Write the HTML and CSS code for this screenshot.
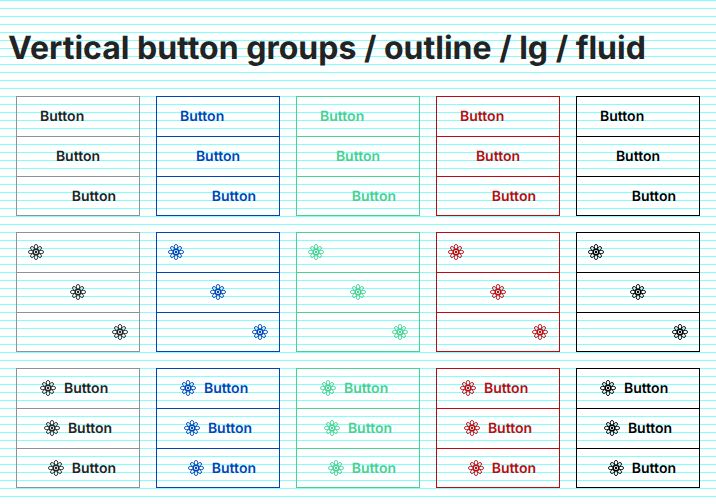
FILE: index.html
```
<!DOCTYPE html>
<html lang="en">
<head>
<meta charset="utf-8">
<title>Vertical button groups</title>
<link rel="stylesheet" href="styles.css">
</head>
<body>
<svg class="defs" aria-hidden="true">
  <symbol id="atom" viewBox="0 0 16 16">
    <g fill="none" stroke="currentColor" stroke-width="0.9">
      <ellipse cx="13.2" cy="8" rx="2.4" ry="1.7"/>
      <ellipse cx="2.8" cy="8" rx="2.4" ry="1.7"/>
      <ellipse cx="8" cy="13.2" rx="1.7" ry="2.4"/>
      <ellipse cx="8" cy="2.8" rx="1.7" ry="2.4"/>
      <ellipse cx="13" cy="8" rx="2.2" ry="1.6" transform="rotate(45 8 8)"/>
      <ellipse cx="13" cy="8" rx="2.2" ry="1.6" transform="rotate(135 8 8)"/>
      <ellipse cx="13" cy="8" rx="2.2" ry="1.6" transform="rotate(225 8 8)"/>
      <ellipse cx="13" cy="8" rx="2.2" ry="1.6" transform="rotate(315 8 8)"/>
      <circle cx="8" cy="8" r="2.7" stroke-width="1.2"/>
    </g>
    <circle cx="8" cy="8" r="1.2" fill="currentColor"/>
  </symbol>
</svg>
<h1 class="title">Vertical button groups / outline / lg / fluid</h1>
<main class="board" id="board"></main>
<script src="script.js"></script>
</body>
</html>
```
FILE: styles.css
```
* {
  box-sizing: border-box;
}

body {
  margin: 0;
  min-height: 100vh;
  font-family: Inter, "Liberation Sans", sans-serif;
  text-rendering: geometricPrecision;
  color: #222324;
  background: repeating-linear-gradient(#80ffff 0 1px, #ffffff 1px 8px);
}

.defs {
  display: none;
}

.title {
  margin: 0;
  padding: 28px 8px;
  font-size: 32px;
  line-height: 40px;
  font-weight: 700;
  white-space: nowrap;
}

.board {
  display: grid;
  grid-template-columns: repeat(5, 1fr);
  gap: 16px;
  padding: 0 16px 16px;
}

.group {
  display: flex;
  flex-direction: column;
  border: 0 solid var(--line);
  border-width: 0 1px;
  color: var(--ink);
}

.button {
  height: 40px;
  display: flex;
  align-items: center;
  gap: 8px;
  padding: 0 23px;
  border: 0 solid var(--line);
  border-width: 1px 0;
  border-bottom-color: transparent;
  background: transparent;
  color: inherit;
  font: 600 14px/21px Inter, "Liberation Sans", sans-serif;
  text-rendering: inherit;
  cursor: pointer;
}

.button:last-child {
  border-bottom-color: var(--line);
}

.button.icon-only {
  padding: 0 11px;
}

.start { justify-content: flex-start; }
.center { justify-content: center; }
.end { justify-content: flex-end; }

.icon {
  width: 16px;
  height: 16px;
  flex: none;
}

.neutral { --ink: #222324; --line: #8f9299; }
.primary { --ink: #0045b5; --line: #0045b5; }
.success { --ink: #48d192; --line: #48d192; }
.danger { --ink: #b50d12; --line: #b50d12; }
.black { --ink: #000000; --line: #000000; }
```
FILE: script.js
```
const variants = ["neutral", "primary", "success", "danger", "black"];
const kinds = ["text", "icon-only", "both"];
const aligns = ["start", "center", "end"];
const icon = '<svg class="icon" aria-hidden="true"><use href="#atom"/></svg>';

document.getElementById("board").innerHTML = kinds.map(kind =>
  variants.map(variant =>
    `<div class="group ${variant}" role="group">` +
    aligns.map(align => {
      const label = kind === "icon-only" ? ' aria-label="Button"' : "";
      return `<button type="button" class="button ${kind} ${align}"${label}>` +
        (kind === "text" ? "" : icon) +
        (kind === "icon-only" ? "" : "<span>Button</span>") +
        "</button>";
    }).join("") +
    "</div>"
  ).join("")
).join("");
```
